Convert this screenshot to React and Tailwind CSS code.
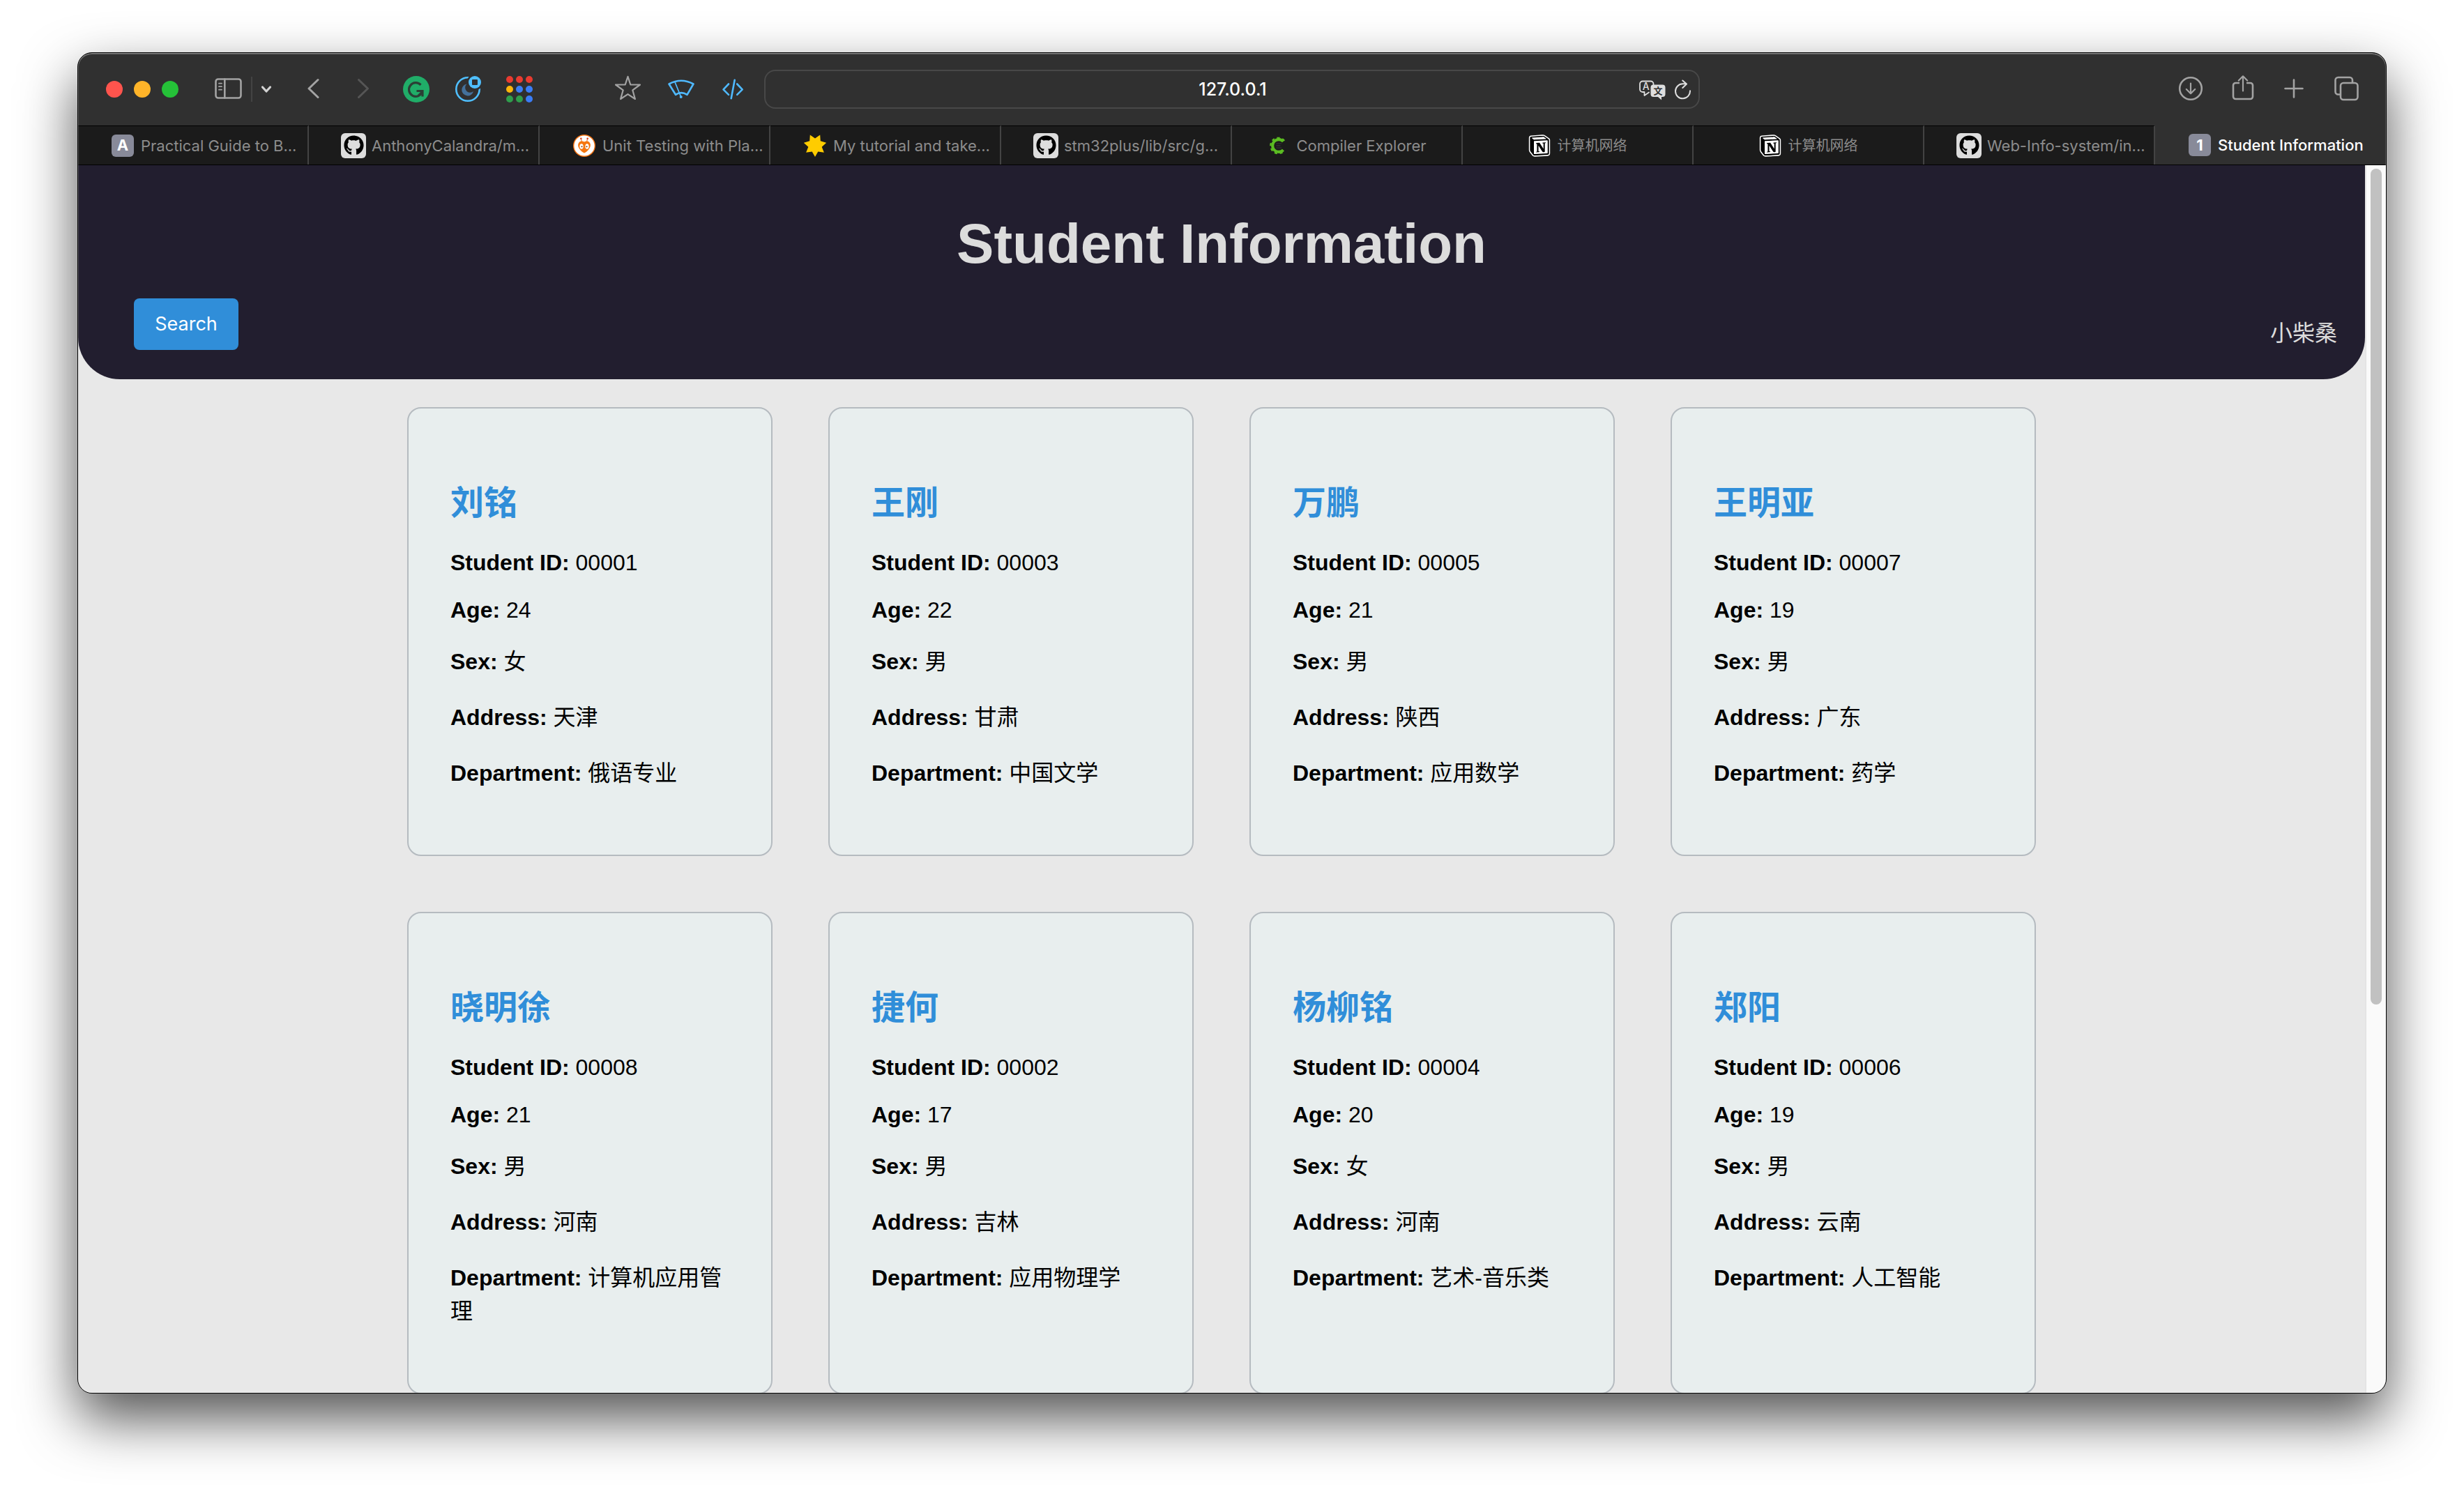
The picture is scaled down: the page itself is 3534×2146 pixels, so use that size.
import React from "react";
import { FaGithub } from "react-icons/fa";
import { SiNotion } from "react-icons/si";

const students = [
  { name: "刘铭", id: "00001", age: 24, sex: "女", address: "天津", department: "俄语专业" },
  { name: "王刚", id: "00003", age: 22, sex: "男", address: "甘肃", department: "中国文学" },
  { name: "万鹏", id: "00005", age: 21, sex: "男", address: "陕西", department: "应用数学" },
  { name: "王明亚", id: "00007", age: 19, sex: "男", address: "广东", department: "药学" },
  { name: "晓明徐", id: "00008", age: 21, sex: "男", address: "河南", department: "计算机应用管理" },
  { name: "捷何", id: "00002", age: 17, sex: "男", address: "吉林", department: "应用物理学" },
  { name: "杨柳铭", id: "00004", age: 20, sex: "女", address: "河南", department: "艺术-音乐类" },
  { name: "郑阳", id: "00006", age: 19, sex: "男", address: "云南", department: "人工智能" },
];

const tabs = [
  { icon: "letter", letter: "A", title: "Practical Guide to B...", long: true },
  { icon: "github", title: "AnthonyCalandra/m...", long: true },
  { icon: "alien", title: "Unit Testing with Pla...", long: true },
  { icon: "sun", title: "My tutorial and take...", long: true },
  { icon: "github", title: "stm32plus/lib/src/g...", long: true },
  { icon: "gear", title: "Compiler Explorer" },
  { icon: "notion", title: "计算机网络", cjk: true },
  { icon: "notion", title: "计算机网络", cjk: true },
  { icon: "github", title: "Web-Info-system/in...", long: true },
  { icon: "letter", letter: "1", title: "Student Information", long: true, active: true },
];

function Glyph({ width = 38, children, className = "text-[#a3a3a3]" }) {
  return (
    <svg
      width={width}
      height="40"
      viewBox={`0 0 ${width} 40`}
      fill="none"
      stroke="currentColor"
      strokeWidth="2.6"
      strokeLinecap="round"
      strokeLinejoin="round"
      className={className}
      aria-hidden="true"
    >
      {children}
    </svg>
  );
}

function IconButton({ label, className = "", children }) {
  return (
    <button type="button" aria-label={label} className={`shrink-0 ${className}`}>
      {children}
    </button>
  );
}

function TrafficLights() {
  return (
    <div className="flex gap-4">
      <button type="button" aria-label="Close" className="size-6 rounded-full bg-[#ff544d]" />
      <button type="button" aria-label="Minimize" className="size-6 rounded-full bg-[#ffb429]" />
      <button type="button" aria-label="Zoom" className="size-6 rounded-full bg-[#25c138]" />
    </div>
  );
}

function ToolbarLeft() {
  return (
    <div className="flex items-center justify-between pr-7 pl-10">
      <div className="flex items-center">
        <TrafficLights />
        <IconButton label="Sidebar" className="ml-[52px]">
          <Glyph width={40}>
            <rect x="1.5" y="5.5" width="36" height="27" rx="3.5" />
            <path d="M14.3 5.5v27" />
            <path d="M6 11.7h4M6 16.2h4M6 20.7h4" strokeWidth="1.8" />
          </Glyph>
        </IconButton>
        <span className="ml-3 h-9 w-0.5 bg-[#434343]" />
        <IconButton label="Tab groups" className="ml-3">
          <Glyph width={16} className="text-[#d2d2d2]">
            <path d="M2.5 17l5.5 6 5.500-6" strokeWidth="3.2" />
          </Glyph>
        </IconButton>
        <IconButton label="Back" className="ml-[50px]">
          <Glyph width={18}>
            <path d="M16 6.500L3 19l13 12.500" strokeWidth="3" />
          </Glyph>
        </IconButton>
        <IconButton label="Forward" className="ml-[54px]">
          <Glyph width={18} className="text-[#555555]">
            <path d="M2.500 6.500L15.500 19l-13 12.500" strokeWidth="3" />
          </Glyph>
        </IconButton>
        <IconButton label="Grammarly" className="ml-12">
          <Glyph>
            <circle cx="19" cy="20" r="19" fill="#20ad68" stroke="none" />
            <path d="M25.500 13.800A9.800 9.800 0 1 0 27.500 24" stroke="#2b3f35" strokeWidth="3.200" strokeLinecap="butt" />
            <path d="M19.500 22.500h8.500v8" stroke="#2b3f35" strokeWidth="3.200" strokeLinecap="butt" strokeLinejoin="miter" />
            <path d="M28 22.500l-6 6" stroke="#2b3f35" strokeWidth="2" strokeLinecap="butt" />
          </Glyph>
        </IconButton>
        <IconButton label="Dark mode" className="ml-9">
          <Glyph>
            <circle cx="19" cy="20" r="16.700" stroke="#4fbfff" />
            <path d="M17.500 12.500a8.500 8.500 0 1 0 9.500 10.500a7 7 0 0 1-9.500-10.500z" fill="#44719b" stroke="none" />
            <circle cx="29" cy="10" r="11.500" fill="#303030" stroke="none" />
            <circle cx="29" cy="10" r="9" fill="#4fbfff" stroke="none" />
            <rect x="25" y="6" width="8" height="8" rx="1" fill="#303030" stroke="none" />
          </Glyph>
        </IconButton>
        <IconButton label="Apps" className="ml-9">
          <Glyph>
            <g stroke="none">
              <circle cx="5" cy="6" r="5" fill="#e83b30" />
              <circle cx="19" cy="6" r="5" fill="#e83b30" />
              <circle cx="33" cy="6" r="5" fill="#e83b30" />
              <circle cx="5" cy="20" r="5" fill="#ffb60a" />
              <circle cx="19" cy="20" r="5" fill="#3b7df6" />
              <circle cx="33" cy="20" r="5" fill="#3b7df6" />
              <circle cx="5" cy="34" r="5" fill="#2f9e4c" />
              <circle cx="19" cy="34" r="5" fill="#2f9e4c" />
              <circle cx="33" cy="34" r="5" fill="#3b7df6" />
            </g>
          </Glyph>
        </IconButton>
      </div>
      <div className="flex items-center gap-[38px]">
        <IconButton label="Bookmark">
          <Glyph>
            <path
              d="M18.500 1.800L22.300 13.500H36L25.300 21.300L28.900 34L18.500 27.200L8.100 34L11.700 21.300L1 13.500H14.700Z"
              strokeWidth="2.200"
            />
          </Glyph>
        </IconButton>
        <IconButton label="Clean page">
          <Glyph className="text-[#4fb9ff]">
            <path d="M1.500 12.500Q19 3 36.500 12.500L27.500 27.800Q19 22.500 11 27.800Z" />
            <path d="M10.300 10.500L18.700 31" strokeWidth="1.800" />
            <circle cx="18.700" cy="31" r="2" fill="currentColor" stroke="none" />
          </Glyph>
        </IconButton>
        <IconButton label="View source">
          <Glyph width={34} className="text-[#4fb9ff]">
            <path d="M11 12.500L3.500 20.300l7.500 7.500M23.200 12.500l7.500 7.800l-7.500 7.500M19.700 6.800l-5 26.500" />
          </Glyph>
        </IconButton>
      </div>
    </div>
  );
}

function AddressBar() {
  return (
    <div className="flex h-14 items-center rounded-[16px] border-2 border-[#484848] pr-2.5 pl-22">
      <input
        type="text"
        aria-label="Address"
        defaultValue="127.0.0.1"
        className="min-w-0 flex-1 bg-transparent text-center font-['Inter',sans-serif] text-[25px] leading-8 font-medium text-white outline-none"
      />
      <IconButton label="Translate">
        <Glyph width={40} className="text-[#dedede]">
          <path d="M15 24.500l-6.500 4.500v-5H6a4 4 0 0 1-4-4v-7.500a4 4 0 0 1 4-4h11.500a4 4 0 0 1 4 4v1" strokeWidth="1.800" />
          <text x="10.800" y="20.500" textAnchor="middle" fill="currentColor" stroke="none" fontSize="14" className="font-['Inter',sans-serif] font-medium">A</text>
          <path d="M21.500 13.500h13a4 4 0 0 1 4 4v9.500a4 4 0 0 1-4 4h-1.500v4.500l-5-4.500h-6.500a4 4 0 0 1-4-4v-9.500a4 4 0 0 1 4-4z" fill="currentColor" stroke="none" />
          <text x="28" y="27" textAnchor="middle" fill="#303030" stroke="none" fontSize="13" className="font-['Noto_Sans_CJK_SC',sans-serif] font-bold">文</text>
        </Glyph>
      </IconButton>
      <IconButton label="Reload" className="ml-3">
        <Glyph width={24} className="text-[#dedede]">
          <path d="M22 22.300A10.500 10.500 0 1 1 11.500 12.300H16M11.300 7.500L17 12.600L11.300 18" strokeWidth="2" />
        </Glyph>
      </IconButton>
    </div>
  );
}

function ToolbarRight() {
  return (
    <div className="flex items-center justify-end gap-9 pr-[38px]">
      <IconButton label="Downloads">
        <Glyph>
          <circle cx="18" cy="19" r="15.800" />
          <path d="M18 11.500v14.500M11.800 20l6.200 6.200l6.200-6.200" strokeWidth="2.200" />
        </Glyph>
      </IconButton>
      <IconButton label="Share">
        <Glyph>
          <path d="M14 11H8.500a3.500 3.500 0 0 0-3.500 3.500V30.500a3.500 3.500 0 0 0 3.500 3.500h21a3.500 3.500 0 0 0 3.500-3.500V14.500a3.500 3.500 0 0 0-3.500-3.500H24" strokeLinecap="butt" />
          <path d="M19 1.500V22.500M12.800 7.500L19 1.300l6.200 6.200" strokeWidth="2.200" />
        </Glyph>
      </IconButton>
      <IconButton label="New tab">
        <Glyph>
          <path d="M18 6.500v25M5.500 19h25" />
        </Glyph>
      </IconButton>
      <IconButton label="Tab overview">
        <Glyph>
          <rect x="11" y="11" width="24.500" height="24" rx="4" />
          <path d="M10 27.500H7.500a4 4 0 0 1-4-4V7a4 4 0 0 1 4-4H24a4 4 0 0 1 4 4v3.500" strokeLinecap="butt" />
        </Glyph>
      </IconButton>
    </div>
  );
}

const sunPoints = Array.from({ length: 14 }, (_, i) => {
  const angle = Math.PI / 2 + (i * Math.PI) / 7;
  const radius = i % 2 === 0 ? 16.5 : 10;
  return `${(16 + radius * Math.cos(angle)).toFixed(1)},${(15.5 + radius * Math.sin(angle)).toFixed(1)}`;
}).join(" ");

function TabIcon({ tab }) {
  if (tab.icon === "letter") {
    return (
      <span className="flex size-8 shrink-0 items-center justify-center rounded-md bg-[#888a99] font-['Inter',sans-serif] text-[22px] font-bold text-white">
        {tab.letter}
      </span>
    );
  }
  if (tab.icon === "github") {
    return (
      <span className="flex size-9 shrink-0 items-center justify-center rounded-md bg-[#dddddd] text-black">
        <FaGithub size={29} />
      </span>
    );
  }
  if (tab.icon === "notion") {
    return (
      <svg width="32" height="32" viewBox="-1.500 -1.500 27 27" className="shrink-0" aria-hidden="true">
        <path
          d="M1.936 1.035l13.310-.980c1.634-.140 2.055-.047 3.082.700l4.249 2.986c.700.513.934.653.934 1.213v16.378c0 1.026-.373 1.634-1.680 1.726l-15.458.934c-.980.047-1.448-.093-1.962-.747l-3.129-4.060c-.560-.747-.793-1.306-.793-1.960V2.667c0-.839.374-1.540 1.447-1.632z"
          fill="#fff"
          stroke="#fff"
          strokeWidth="2.600"
        />
        <SiNotion size={24} color="#000" />
      </svg>
    );
  }
  if (tab.icon === "sun") {
    return (
      <svg width="32" height="32" viewBox="0 0 32 32" className="shrink-0" aria-hidden="true">
        <polygon points={sunPoints} fill="#ffcc00" />
      </svg>
    );
  }
  if (tab.icon === "gear") {
    return (
      <svg width="32" height="32" viewBox="-2 -2 36 36" fill="none" className="shrink-0" aria-hidden="true">
        <path d="M24.500 9.200A10 10 0 1 0 24.500 22.800" stroke="#5bbd22" strokeWidth="4.600" />
        <path d="M26.300 8A12.600 12.600 0 1 0 26.300 24" stroke="#5bbd22" strokeWidth="2.600" strokeDasharray="4.500 4.300" />
        <path d="M13 12.500h9M13 16h7M13 19.500h9" stroke="#333" strokeWidth="1.600" />
      </svg>
    );
  }
  return (
    <svg width="32" height="32" viewBox="0 0 32 32" className="shrink-0" aria-hidden="true">
      <circle cx="16" cy="16" r="15.300" fill="#fff" stroke="#f5720f" strokeWidth="1.400" />
      <path d="M12.500 11L11.500 6M19.500 11L20.500 6" stroke="#e0651a" strokeWidth="1" />
      <circle cx="11.300" cy="5.800" r="1.300" fill="#d8431f" />
      <circle cx="20.700" cy="5.800" r="1.300" fill="#d8431f" />
      <path d="M16 10.500c2-1.300 5-1.500 7.300.5c2.500 3 1.700 6.500-.3 9.500c-2 3-4.500 5-7 6c-2.500-1-5-3-7-6c-2-3-2.800-6.500-.3-9.500c2.300-2 5.300-1.800 7.300-.5z" fill="#f5760f" />
      <ellipse cx="12" cy="17" rx="2.600" ry="3.800" fill="#fff" />
      <ellipse cx="20" cy="17" rx="2.600" ry="3.800" fill="#fff" />
      <circle cx="12.500" cy="17.300" r="1.100" fill="#8a4a20" />
      <circle cx="19.500" cy="17.300" r="1.100" fill="#8a4a20" />
    </svg>
  );
}

function Tab({ tab }) {
  const surface = tab.active
    ? "bg-[#303030] font-medium text-white"
    : "border-t border-r-2 border-t-black border-r-[#434343] bg-[#1b1b1b] text-[#8c8c8c]";
  const inset = tab.icon === "github" ? "pl-[46px]" : "pl-12";
  const align = tab.long ? `justify-start ${inset}` : "justify-center";
  const gap = tab.icon === "github" ? "gap-2" : "gap-2.5";
  const size = tab.cjk ? "text-[20px]" : "text-[22px]";
  return (
    <button
      type="button"
      role="tab"
      aria-selected={Boolean(tab.active)}
      className={`flex min-w-0 items-center ${gap} ${surface} ${align}`}
    >
      <TabIcon tab={tab} />
      <span className={`whitespace-nowrap font-['Inter','Noto_Sans_CJK_SC',sans-serif] leading-7 ${size}`}>{tab.title}</span>
    </button>
  );
}

function Field({ label, value, tall }) {
  return (
    <p className={`mt-8 text-[32px] text-black ${tall ? "leading-[48px]" : "leading-9"}`}>
      <strong>{label}:</strong> {value}
    </p>
  );
}

function StudentCard({ student }) {
  return (
    <article className="rounded-[20px] border-2 border-[#b5bbc0] bg-[#e8eeee] px-15 pt-25 pb-[93px]">
      <h2 className="text-[48px] leading-[71px] font-bold text-[#308ed9]">{student.name}</h2>
      <Field label="Student ID" value={student.id} />
      <Field label="Age" value={student.age} />
      <Field label="Sex" value={student.sex} tall />
      <Field label="Address" value={student.address} tall />
      <Field label="Department" value={student.department} tall />
    </article>
  );
}

function Page() {
  return (
    <div className="min-w-0 flex-1 bg-[#e8e8e8] font-['Liberation_Sans','Noto_Sans_CJK_SC',sans-serif]">
      <header className="rounded-b-[60px] bg-[#221e2f] pt-[67px] pr-10 pb-[42px] pl-20">
        <h1 className="-ml-10 text-center text-[80px] leading-[92px] font-bold text-[#dcdcdc]">Student Information</h1>
        <div className="mt-8 flex items-end justify-between">
          <button
            type="button"
            className="h-[74px] w-[150px] rounded-lg bg-[#308ed9] font-['Inter',sans-serif] text-[27px] text-white"
          >
            Search
          </button>
          <p className="text-[32px] leading-[48px] text-[#dcdcdc]">小柴桑</p>
        </div>
      </header>
      <main className="mx-auto grid max-w-[2336px] grid-cols-4 gap-20 pt-10">
        {students.map((student) => (
          <StudentCard key={student.id} student={student} />
        ))}
      </main>
    </div>
  );
}

function ScrollTrack() {
  return (
    <div className="w-[30px] shrink-0 border-l-2 border-[#e4e4e4] bg-[#fafafa] pt-[5px] pl-1.5">
      <div className="h-[68.3%] w-4 rounded-full bg-[#c1c1c1]" />
    </div>
  );
}

export default function App() {
  return (
    <div className="h-screen overflow-hidden bg-white px-[111px] pt-[75px] pb-[147px]">
      <div className="relative flex h-full flex-col overflow-hidden rounded-[21px] border border-black bg-[#303030] shadow-[0_36px_80px_rgba(0,0,0,0.68)]">
        <div className="grid h-26 shrink-0 grid-cols-[984px_1fr_984px] items-center">
          <ToolbarLeft />
          <AddressBar />
          <ToolbarRight />
        </div>
        <div role="tablist" aria-label="Open tabs" className="grid h-[57px] shrink-0 grid-cols-10 border-b border-black">
          {tabs.map((tab, i) => (
            <Tab key={i} tab={tab} />
          ))}
        </div>
        <div className="flex min-h-0 flex-1 overflow-hidden">
          <Page />
          <ScrollTrack />
        </div>
        <div className="pointer-events-none absolute inset-0 rounded-[20px] shadow-[inset_0_2px_0_rgba(255,255,255,0.25),inset_0_0_0_1px_rgba(255,255,255,0.2)]" />
      </div>
    </div>
  );
}
